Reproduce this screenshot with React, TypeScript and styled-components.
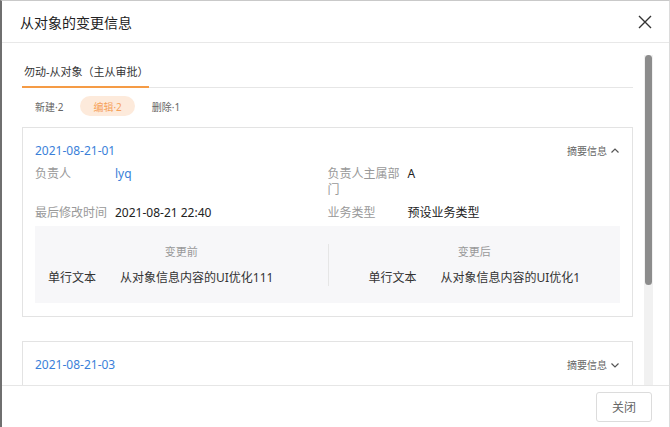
import styled, { createGlobalStyle } from "styled-components";

const GlobalStyle = createGlobalStyle`
  html, body {
    margin: 0;
    padding: 0;
    background: #fff;
  }
  body {
    font-family: "Noto Sans", "Noto Sans CJK SC", sans-serif;
    color: #333;
  }
  * {
    box-sizing: border-box;
  }
`;

const Modal = styled.div`
  width: 670px;
  height: 427px;
  display: flex;
  flex-direction: column;
  background: #fff;
  border-left: 2px solid #6f6f6f;
  border-top: 1px solid #c9c9c9;
  border-right: 1px solid #dcdcdc;
  overflow: hidden;
`;

const Header = styled.div`
  height: 42px;
  flex-shrink: 0;
  display: flex;
  align-items: center;
  justify-content: space-between;
  padding: 0 15px 0 18px;
  border-bottom: 1px solid #e8e8e8;
`;

const Title = styled.h2`
  margin: 0;
  font-size: 14px;
  font-weight: 400;
  color: #222;
`;

const CloseButton = styled.button`
  border: none;
  background: none;
  padding: 0;
  width: 18px;
  height: 18px;
  display: flex;
  align-items: center;
  justify-content: center;
  cursor: pointer;
`;

const Body = styled.div`
  flex: 1;
  min-height: 0;
  display: flex;
  padding-left: 20px;
`;

const Content = styled.div`
  flex: 1;
  min-width: 0;
  overflow: hidden;
  padding-top: 21px;
`;

const ScrollTrack = styled.div`
  width: 9px;
  margin: 12px 16px 0 11px;
  background: #f1f1f1;
  display: flex;
  flex-direction: column;
`;

const ScrollThumb = styled.div`
  width: 7px;
  margin: 0 auto;
  height: 230px;
  border-radius: 4px;
  background: #8c8c8c;
`;

const TabBar = styled.div`
  display: flex;
  border-bottom: 1px solid #e6e6e6;
`;

const Tab = styled.div<{ $active?: boolean }>`
  padding: 0 0 6px 2px;
  white-space: nowrap;
  font-size: 11px;
  line-height: 16px;
  color: #333;
  border-bottom: 2px solid ${(p) => (p.$active ? "#f59b45" : "transparent")};
  margin-bottom: -1px;
`;

const FilterRow = styled.div`
  display: flex;
  align-items: center;
  gap: 11px;
  padding: 8px 0 0 7px;
`;

const Pill = styled.span<{ $active?: boolean }>`
  display: inline-flex;
  align-items: center;
  height: 20px;
  padding: 0 ${(p) => (p.$active ? "13px" : "6px")};
  border-radius: 10px;
  font-size: 10px;
  color: ${(p) => (p.$active ? "#f6a15a" : "#666")};
  background: ${(p) => (p.$active ? "#fdeadb" : "transparent")};
`;

const Card = styled.div`
  margin-top: 11px;
  width: 611px;
  border: 1px solid #e3e3e3;
  padding: 14px 12px 13px 12px;
`;

const SecondCard = styled(Card)`
  margin-top: 24px;
`;

const CardHead = styled.div`
  display: flex;
  align-items: center;
  justify-content: space-between;
`;

const RecordLink = styled.a`
  font-size: 12px;
  color: #3b7fd9;
  text-decoration: none;
`;

const Summary = styled.span`
  display: inline-flex;
  align-items: center;
  gap: 3px;
  font-size: 10px;
  color: #666;
`;

const FieldGrid = styled.div`
  display: grid;
  grid-template-columns: 1fr 1fr;
  row-gap: 7px;
  margin-top: 7px;
`;

const Field = styled.div`
  display: flex;
  gap: 8px;
  font-size: 12px;
  line-height: 16px;
`;

const Label = styled.span`
  width: 72px;
  flex-shrink: 0;
  color: #999;
`;

const Value = styled.span<{ $link?: boolean }>`
  color: ${(p) => (p.$link ? "#3b7fd9" : "#222")};
`;

const Compare = styled.div`
  margin-top: 5px;
  background: #f7f7f9;
  display: grid;
  grid-template-columns: 1fr 1fr;
  padding: 18px 0 17px;
`;

const Side = styled.div<{ $right?: boolean }>`
  display: flex;
  flex-direction: column;
  gap: 10px;
  padding-left: ${(p) => (p.$right ? "40px" : "13px")};
  border-left: ${(p) => (p.$right ? "1px solid #e6e6e6" : "none")};
`;

const SideTitle = styled.div<{ $right?: boolean }>`
  font-size: 11px;
  line-height: 16px;
  color: #999;
  text-align: center;
  padding-right: ${(p) => (p.$right ? "0" : "13px")};
  margin-left: ${(p) => (p.$right ? "-40px" : "0")};
`;

const ChangeRow = styled.div`
  display: flex;
  gap: 24px;
  font-size: 12px;
  line-height: 16px;
  color: #333;
`;

const Footer = styled.div`
  height: 42px;
  flex-shrink: 0;
  border-top: 1px solid #e6e6e6;
  display: flex;
  align-items: center;
  justify-content: flex-end;
  padding: 0 17px 0 0;
`;

const Button = styled.button`
  height: 30px;
  padding: 0 15px;
  border: 1px solid #dcdcdc;
  border-radius: 3px;
  background: #fff;
  font-family: inherit;
  font-size: 12px;
  color: #666;
`;

const Chevron = ({ up }: { up?: boolean }) => (
  <svg width="10" height="10" viewBox="0 0 10 10" fill="none">
    <path
      d={up ? "M1.5 6.5 L5 3 L8.5 6.5" : "M1.5 3.5 L5 7 L8.5 3.5"}
      stroke="#555"
      strokeWidth="1.2"
    />
  </svg>
);

const App = () => {
  return (
    <>
      <GlobalStyle />
      <Modal>
        <Header>
          <Title>从对象的变更信息</Title>
          <CloseButton>
            <svg width="14" height="14" viewBox="0 0 14 14">
              <path d="M1 1 L13 13 M13 1 L1 13" stroke="#333" strokeWidth="1.4" />
            </svg>
          </CloseButton>
        </Header>
        <Body>
          <Content>
            <TabBar>
              <Tab $active>勿动-从对象（主从审批）</Tab>
            </TabBar>
            <FilterRow>
              <Pill>新建·2</Pill>
              <Pill $active>编辑·2</Pill>
              <Pill>删除·1</Pill>
            </FilterRow>
            <Card>
              <CardHead>
                <RecordLink>2021-08-21-01</RecordLink>
                <Summary>
                  摘要信息
                  <Chevron up />
                </Summary>
              </CardHead>
              <FieldGrid>
                <Field>
                  <Label>负责人</Label>
                  <Value $link>lyq</Value>
                </Field>
                <Field>
                  <Label>负责人主属部门</Label>
                  <Value>A</Value>
                </Field>
                <Field>
                  <Label>最后修改时间</Label>
                  <Value>2021-08-21 22:40</Value>
                </Field>
                <Field>
                  <Label>业务类型</Label>
                  <Value>预设业务类型</Value>
                </Field>
              </FieldGrid>
              <Compare>
                <Side>
                  <SideTitle>变更前</SideTitle>
                  <ChangeRow>
                    <span>单行文本</span>
                    <span>从对象信息内容的UI优化111</span>
                  </ChangeRow>
                </Side>
                <Side $right>
                  <SideTitle $right>变更后</SideTitle>
                  <ChangeRow>
                    <span>单行文本</span>
                    <span>从对象信息内容的UI优化1</span>
                  </ChangeRow>
                </Side>
              </Compare>
            </Card>
            <SecondCard>
              <CardHead>
                <RecordLink>2021-08-21-03</RecordLink>
                <Summary>
                  摘要信息
                  <Chevron />
                </Summary>
              </CardHead>
            </SecondCard>
          </Content>
          <ScrollTrack>
            <ScrollThumb />
          </ScrollTrack>
        </Body>
        <Footer>
          <Button>关闭</Button>
        </Footer>
      </Modal>
    </>
  );
};

export default App;
